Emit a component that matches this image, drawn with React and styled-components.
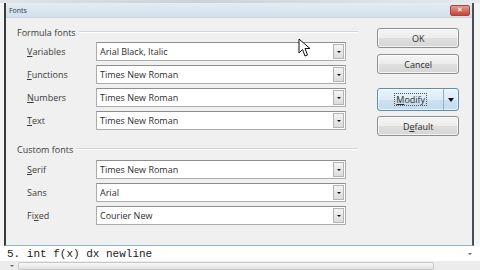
import React from "react";
import styled, { createGlobalStyle } from "styled-components";

const GlobalStyle = createGlobalStyle`
  html, body { margin: 0; padding: 0; background: #ffffff; }
  body { font-family: "Open Sans", "Noto Sans", sans-serif; }
`;

const Screen = styled.div`
  position: relative;
  width: 480px;
  height: 270px;
  overflow: hidden;
  background: #f4f4f4;
  display: flex;
  flex-direction: column;
`;

const TopStrip = styled.div`
  height: 3px;
  background: linear-gradient(90deg, #dfe3e8, #c9d2dc 40%, #e6e9ee);
`;

const Dialog = styled.div`
  margin-left: 4px;
  width: 470px;
  height: 243px;
  border-left: 2px solid #3a3a3a;
  border-right: 2px solid #4a4f55;
  border-bottom: 1px solid #8fb2c9;
  background: #f0f0f0;
  display: flex;
  flex-direction: column;
  box-sizing: border-box;
`;

const TitleBar = styled.div`
  height: 14px;
  display: flex;
  align-items: center;
  justify-content: space-between;
  padding: 0 2px 0 3px;
  background: linear-gradient(180deg, #e4ecf4, #d3dfeb);
  border-bottom: 1px solid #c8d4e0;
`;

const Title = styled.span`
  font-size: 7px;
  color: #2b3a4a;
`;

const CloseButton = styled.div`
  width: 20px;
  height: 11px;
  border-radius: 2px;
  background: linear-gradient(180deg, #e49a8e, #c7443a);
  border: 1px solid #9e4a44;
  box-sizing: border-box;
  display: flex;
  align-items: center;
  justify-content: center;
  color: #fff;
  font-size: 7px;
  line-height: 1;
  font-family: "DejaVu Sans", sans-serif;
`;

const Body = styled.div`
  flex: 1;
  display: flex;
  padding: 8px 13px 0 11px;
  gap: 19px;
`;

const LeftColumn = styled.div`
  width: 343px;
  display: flex;
  flex-direction: column;
`;

const Heading = styled.div`
  height: 12px;
  display: flex;
  align-items: center;
  gap: 3px;
  font-size: 9px;
  color: #3b3b3b;
  margin-top: ${(p) => p.$top || 0}px;
  margin-bottom: ${(p) => p.$bottom || 4}px;

  &::after {
    content: "";
    flex: 1;
    height: 0;
    border-top: 1px solid #d5d5d5;
    border-bottom: 1px solid #ffffff;
  }
`;

const Row = styled.div`
  height: 19px;
  margin-bottom: 4px;
  display: flex;
  align-items: center;
`;

const Label = styled.span`
  width: 69px;
  padding-left: 10px;
  font-size: 9px;
  color: #3b3b3b;

  u {
    text-decoration: underline;
    text-underline-offset: 1px;
  }
`;

const Combo = styled.div`
  flex: 1;
  height: 19px;
  margin-right: 12px;
  box-sizing: border-box;
  border: 1px solid #acacac;
  border-top-color: #8e8e8e;
  background: #ffffff;
  display: flex;
  align-items: center;
  padding: 1px 1px 1px 3px;
`;

const ComboText = styled.span`
  flex: 1;
  font-size: 9px;
  color: #2e2e2e;
`;

const ComboArrow = styled.div`
  width: 11px;
  height: 15px;
  box-sizing: border-box;
  border: 1px solid #b4b4b4;
  background: linear-gradient(180deg, #f4f4f4, #dcdcdc);
  display: flex;
  align-items: center;
  justify-content: center;

  &::before {
    content: "";
    border-left: 2px solid transparent;
    border-right: 2px solid transparent;
    border-top: 2px solid #111;
  }
`;

const RightColumn = styled.div`
  width: 82px;
  display: flex;
  flex-direction: column;
  padding-top: 2px;
`;

const Button = styled.div`
  height: ${(p) => p.$h || 20}px;
  margin-bottom: ${(p) => p.$gap || 6}px;
  box-sizing: border-box;
  border: 1px solid ${(p) => (p.$focused ? "#5b8db5" : "#8f8f8f")};
  border-radius: 3px;
  background: ${(p) =>
    p.$focused
      ? "linear-gradient(180deg, #eaf3fb 0%, #dcebf7 50%, #cbe0f1 51%, #c4dbee 100%)"
      : "linear-gradient(180deg, #f6f6f6 0%, #ececec 50%, #dfdfdf 51%, #d6d6d6 100%)"};
  box-shadow: inset 0 0 0 1px rgba(255, 255, 255, 0.7);
  display: flex;
  align-items: stretch;
  font-size: 9px;
  color: #2e2e2e;
`;

const ButtonLabel = styled.span`
  flex: 1;
  display: flex;
  align-items: center;
  justify-content: center;
`;

const FocusText = styled.span`
  outline: 1px dotted #555;
  outline-offset: 0;
  padding: 0 1px;
  line-height: 11px;
`;

const SplitPart = styled.span`
  width: 14px;
  border-left: 1px solid #8fb1cc;
  display: flex;
  align-items: center;
  justify-content: center;

  &::before {
    content: "";
    border-left: 3px solid transparent;
    border-right: 3px solid transparent;
    border-top: 4px solid #111;
  }
`;

const Editor = styled.div`
  flex: 1;
  background: #ffffff;
  display: flex;
  flex-direction: column;
`;

const EditorLine = styled.div`
  height: 15px;
  display: flex;
  align-items: center;
  justify-content: space-between;
  padding: 0 8px 0 7px;
  font-family: "Liberation Mono", "Courier New", monospace;
  font-size: 11px;
  color: #1a1a1a;
`;

const SmallArrow = styled.span`
  border-left: 2px solid transparent;
  border-right: 2px solid transparent;
  border-top: 2px solid #666;
`;

const ScrollBar = styled.div`
  flex: 1;
  background: #ececec;
  display: flex;
  align-items: center;
  padding: 0 12px 0 10px;
  gap: 4px;
`;

const ScrollThumb = styled.div`
  width: 414px;
  height: 6px;
  border: 1px solid #c8c8c8;
  border-radius: 2px;
  background: linear-gradient(180deg, #f8f8f8, #e2e2e2);
`;

const Cursor = styled.svg`
  position: absolute;
  left: 298px;
  top: 38px;
`;

const fields = [
  { label: ["V", "ariables"], value: "Arial Black, Italic" },
  { label: ["F", "unctions"], value: "Times New Roman" },
  { label: ["N", "umbers"], value: "Times New Roman" },
  { label: ["T", "ext"], value: "Times New Roman" },
];

const custom = [
  { label: ["S", "erif"], value: "Times New Roman" },
  { label: ["", "Sans"], value: "Arial" },
  { label: ["Fi", "xed", true], value: "Courier New" },
];

const FieldRow = ({ label, value }) => (
  <Row>
    <Label>
      {label[2] ? (
        <>
          {label[0]}
          <u>x</u>ed
        </>
      ) : (
        <>
          {label[0] && <u>{label[0]}</u>}
          {label[1]}
        </>
      )}
    </Label>
    <Combo>
      <ComboText>{value}</ComboText>
      <ComboArrow />
    </Combo>
  </Row>
);

export default function App() {
  return (
    <Screen>
      <GlobalStyle />
      <TopStrip />
      <Dialog>
        <TitleBar>
          <Title>Fonts</Title>
          <CloseButton>✕</CloseButton>
        </TitleBar>
        <Body>
          <LeftColumn>
            <Heading>Formula fonts</Heading>
            {fields.map((f) => (
              <FieldRow key={f.value + f.label[1]} {...f} />
            ))}
            <Heading $top={9} $bottom={5}>Custom fonts</Heading>
            {custom.map((f) => (
              <FieldRow key={f.value + f.label[1]} {...f} />
            ))}
          </LeftColumn>
          <RightColumn>
            <Button>
              <ButtonLabel>OK</ButtonLabel>
            </Button>
            <Button $gap={14}>
              <ButtonLabel>Cancel</ButtonLabel>
            </Button>
            <Button $focused $h={23} $gap={5}>
              <ButtonLabel>
                <FocusText>
                  <u>M</u>odify
                </FocusText>
              </ButtonLabel>
              <SplitPart />
            </Button>
            <Button>
              <ButtonLabel>
                D<u>e</u>fault
              </ButtonLabel>
            </Button>
          </RightColumn>
        </Body>
      </Dialog>
      <Editor>
        <EditorLine>
          <span>5. int f(x) dx newline</span>
          <SmallArrow />
        </EditorLine>
        <ScrollBar>
          <SmallArrow />
          <ScrollThumb />
        </ScrollBar>
      </Editor>
      <Cursor width="13" height="20" viewBox="0 0 13 20">
        <path
          d="M1 1 L1 15 L4.5 11.5 L7 18 L9.5 17 L7 10.5 L12 10.5 Z"
          fill="#ffffff"
          stroke="#111111"
          strokeWidth="1"
          strokeLinejoin="round"
        />
      </Cursor>
    </Screen>
  );
}
